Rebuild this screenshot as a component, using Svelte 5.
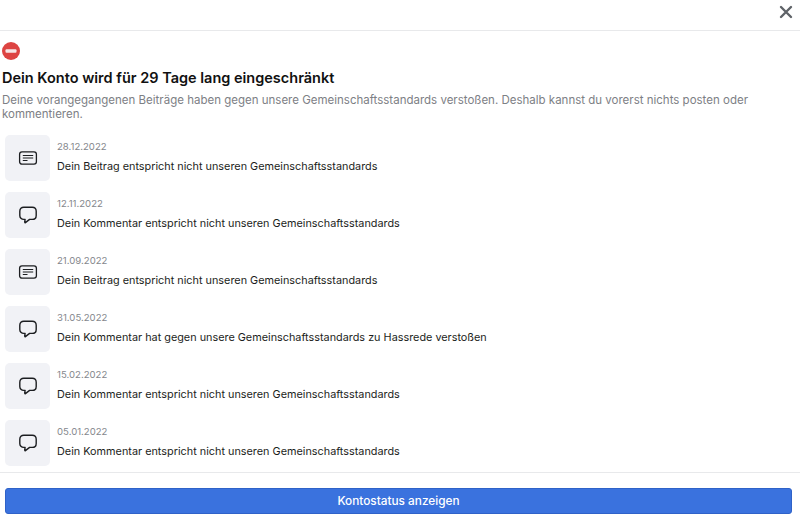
<script>
  const post = 'Dein Beitrag entspricht nicht unseren Gemeinschaftsstandards';
  const comment = 'Dein Kommentar entspricht nicht unseren Gemeinschaftsstandards';
  const items = [
    { date: '28.12.2022', text: post, kind: 'post' },
    { date: '12.11.2022', text: comment, kind: 'comment' },
    { date: '21.09.2022', text: post, kind: 'post' },
    { date: '31.05.2022', text: 'Dein Kommentar hat gegen unsere Gemeinschaftsstandards zu Hassrede verstoßen', kind: 'comment' },
    { date: '15.02.2022', text: comment, kind: 'comment' },
    { date: '05.01.2022', text: comment, kind: 'comment' }
  ];
</script>

<div class="page">
  <header class="top">
    <svg class="close" viewBox="0 0 14 14" width="14" height="14" aria-label="Schließen">
      <path d="M2 2 L12 12 M12 2 L2 12" stroke="#5f6368" stroke-width="2.4" stroke-linecap="round" fill="none" />
    </svg>
  </header>

  <section class="intro">
    <svg class="stop" viewBox="0 0 18 18" width="18" height="18">
      <circle cx="9" cy="9" r="9" fill="#dd4442" />
      <rect x="3.5" y="7.2" width="11" height="3.6" rx="1" fill="#f6e6e6" />
    </svg>
    <h1>Dein Konto wird für 29 Tage lang eingeschränkt</h1>
    <p>Deine vorangegangenen Beiträge haben gegen unsere Gemeinschaftsstandards verstoßen. Deshalb kannst du vorerst nichts posten oder kommentieren.</p>
  </section>

  <ul class="list">
    {#each items as item}
      <li>
        <div class="tile">
          {#if item.kind === 'post'}
            <svg viewBox="0 0 20 16" width="20" height="16" fill="none" stroke="#1c1e21">
              <rect x="1.6" y="1.8" width="16.8" height="12.4" rx="2.4" stroke-width="1.3" />
              <path d="M4.8 5.5 H15.2 M4.8 8 H15.2 M4.8 10.5 H9.5" stroke-width="1.2" />
            </svg>
          {:else}
            <svg viewBox="0 0 20 20" width="20" height="20" fill="none" stroke="#1c1e21">
              <path d="M5.8 2.2 H14.2 C16.6 2.2 18.2 3.8 18.2 6.2 V10.4 C18.2 12.8 16.6 14.4 14.2 14.4 H11.6 L7.4 17.6 C7 17.9 6.6 17.7 6.7 17.2 L7.1 14.4 H5.8 C3.4 14.4 1.8 12.8 1.8 10.4 V6.2 C1.8 3.8 3.4 2.2 5.8 2.2 Z" stroke-width="1.4" stroke-linejoin="round" />
            </svg>
          {/if}
        </div>
        <div class="copy">
          <span class="date">{item.date}</span>
          <span class="text">{item.text}</span>
        </div>
      </li>
    {/each}
  </ul>

  <footer class="bottom">
    <button type="button">Kontostatus anzeigen</button>
  </footer>
</div>

<style>
  :global(body) {
    margin: 0;
    background: #fff;
  }
  .page {
    width: 800px;
    height: 521px;
    overflow: hidden;
    background: #fff;
    font-family: Inter, "Liberation Sans", sans-serif;
    color: #1c1e21;
    display: flex;
    flex-direction: column;
  }
  .top {
    flex: none;
    border-bottom: 1px solid #e8e9eb;
    display: flex;
    justify-content: flex-end;
    align-items: flex-start;
    padding: 5px 7px 0 0;
    box-sizing: border-box;
    height: 31px;
  }
  .intro {
    padding: 11px 40px 0 2px;
  }
  .stop {
    display: block;
  }
  h1 {
    margin: 9px 0 0;
    font-size: 14.5px;
    line-height: 18px;
    font-weight: 600;
    color: #111;
  }
  p {
    margin: 6px 0 0;
    font-size: 11.5px;
    line-height: 14px;
    color: #7d8085;
  }
  .list {
    list-style: none;
    margin: 14px 0 0;
    padding: 0 0 0 5px;
    display: flex;
    flex-direction: column;
    gap: 11px;
  }
  li {
    display: flex;
    align-items: stretch;
    gap: 7px;
    height: 46px;
  }
  .tile {
    width: 45px;
    height: 46px;
    flex: none;
    background: #f1f2f6;
    border-radius: 5px;
    display: flex;
    align-items: center;
    justify-content: center;
    padding-bottom: 1px;
    box-sizing: border-box;
  }
  .copy {
    display: flex;
    flex-direction: column;
    padding-top: 5px;
    gap: 6px;
  }
  .date {
    font-size: 9.6px;
    line-height: 13px;
    color: #85888d;
  }
  .text {
    font-size: 10.85px;
    line-height: 14px;
    color: #1c1e21;
  }
  .bottom {
    margin-top: 6px;
    border-top: 1px solid #e8e9eb;
    padding: 15px 8px 0 5px;
  }
  button {
    display: block;
    width: 100%;
    height: 26px;
    border: 1px solid #2f62c8;
    border-radius: 3px;
    background: #3a72de;
    color: #fff;
    font: 500 11.8px Inter, "Liberation Sans", sans-serif;
    padding: 0;
  }
</style>
